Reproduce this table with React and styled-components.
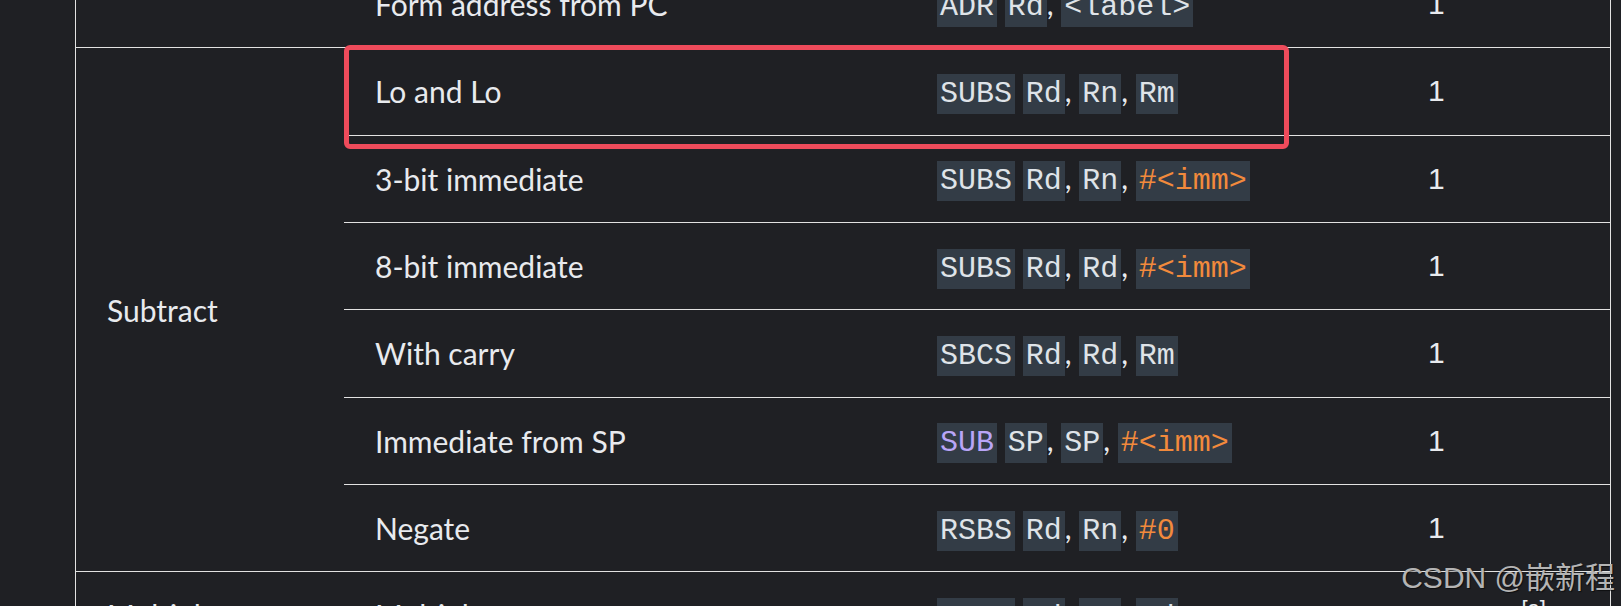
import React from 'react';
import styled, { createGlobalStyle } from 'styled-components';

const GlobalStyle = createGlobalStyle`
  html, body {
    margin: 0;
    padding: 0;
    background: #1f2024;
    overflow: hidden;
  }
`;

const Page = styled.div`
  position: relative;
  width: 1621px;
  height: 606px;
  overflow: hidden;
  box-sizing: border-box;
  padding-left: 75px;
  background: #1f2024;
`;

const Table = styled.table`
  margin-top: -40px;
  width: 1536px;
  table-layout: fixed;
  border-collapse: separate;
  border-spacing: 0;
  border-left: 1px solid #e2e2e2;
  border-right: 1px solid #e2e2e2;
  font-family: Lato, 'Noto Sans', sans-serif;
  font-size: 30px;
  color: #e8eaee;
`;

const Cell = styled.td`
  box-sizing: border-box;
  height: 87.33px;
  padding: 0 31px;
  border-top: 1px solid #e2e2e2;
  vertical-align: middle;
  white-space: nowrap;
  text-align: left;
`;

const CountCell = styled(Cell)`
  font-family: 'Liberation Sans', Arial, sans-serif;
`;

const Note = styled.sup`
  font-size: 22px;
`;

const Code = styled.code`
  font-family: 'Liberation Mono', 'Courier New', monospace;
  font-size: 30px;
  padding: 3px;
  background: #333c46;
  color: ${(p) =>
    p.$tone === 'num' ? '#f28a3c' : p.$tone === 'kw' ? '#b9a5f7' : '#dfe3e8'};
`;

const Highlight = styled.div`
  position: absolute;
  left: 344px;
  top: 45px;
  width: 945px;
  height: 104px;
  box-sizing: border-box;
  border: 5px solid #ee4b5b;
  border-radius: 6px;
  pointer-events: none;
`;

const Watermark = styled.div`
  position: absolute;
  right: 6px;
  top: 561px;
  font-family: 'Liberation Sans', 'Noto Sans CJK SC', sans-serif;
  font-size: 30px;
  line-height: 34px;
  color: #b4b4b4;
  text-shadow: 1px 1px 1px rgba(0, 0, 0, 0.55);
  white-space: nowrap;
  pointer-events: none;
`;

const toneOf = (op) => {
  if (op.startsWith('#')) return 'num';
  if (op === 'SUB') return 'kw';
  return 'text';
};

const Instruction = ({ ops }) => (
  <>
    {ops.map((op, i) => (
      <React.Fragment key={i}>
        {i === 1 && ' '}
        {i > 1 && ', '}
        <Code $tone={toneOf(op)}>{op}</Code>
      </React.Fragment>
    ))}
  </>
);

const groups = [
  {
    name: '',
    rows: [
      { label: 'Form address from PC', ops: ['ADR', 'Rd', '<label>'], cycles: '1' },
    ],
  },
  {
    name: 'Subtract',
    rows: [
      { label: 'Lo and Lo', ops: ['SUBS', 'Rd', 'Rn', 'Rm'], cycles: '1' },
      { label: '3-bit immediate', ops: ['SUBS', 'Rd', 'Rn', '#<imm>'], cycles: '1' },
      { label: '8-bit immediate', ops: ['SUBS', 'Rd', 'Rd', '#<imm>'], cycles: '1' },
      { label: 'With carry', ops: ['SBCS', 'Rd', 'Rd', 'Rm'], cycles: '1' },
      { label: 'Immediate from SP', ops: ['SUB', 'SP', 'SP', '#<imm>'], cycles: '1' },
      { label: 'Negate', ops: ['RSBS', 'Rd', 'Rn', '#0'], cycles: '1' },
    ],
  },
  {
    name: 'Multiply',
    rows: [
      { label: 'Multiply', ops: ['MULS', 'Rd', 'Rm', 'Rd'], cycles: '1 or 32', note: '[a]' },
    ],
  },
];

export default function App() {
  return (
    <>
      <GlobalStyle />
      <Page>
        <Table>
          <colgroup>
            <col style={{ width: 268 }} />
            <col style={{ width: 562 }} />
            <col style={{ width: 491 }} />
            <col style={{ width: 213 }} />
          </colgroup>
          <tbody>
            {groups.map((g) =>
              g.rows.map((r, i) => (
                <tr key={g.name + r.label}>
                  {i === 0 && <Cell rowSpan={g.rows.length}>{g.name}</Cell>}
                  <Cell>{r.label}</Cell>
                  <Cell>
                    <Instruction ops={r.ops} />
                  </Cell>
                  <CountCell>
                    {r.cycles}
                    {r.note && <Note>{r.note}</Note>}
                  </CountCell>
                </tr>
              ))
            )}
          </tbody>
        </Table>
        <Highlight />
        <Watermark>CSDN @嵌新程</Watermark>
      </Page>
    </>
  );
}
